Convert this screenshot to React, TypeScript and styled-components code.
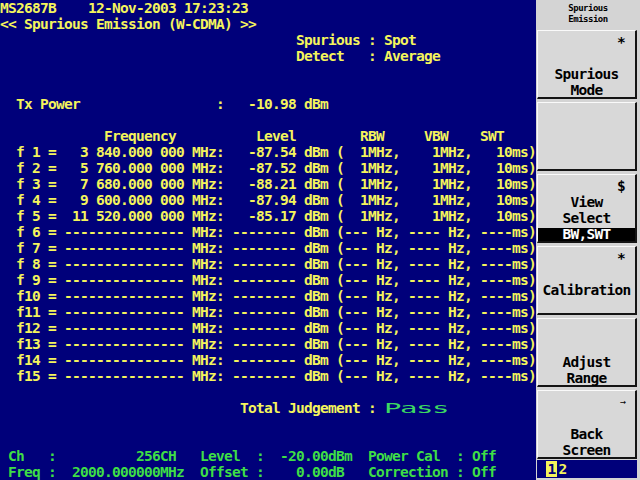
import React from 'react';
import styled, { createGlobalStyle } from 'styled-components';

const NAVY = '#00007a';
const YELLOW = '#f4f45c';
const GREEN = '#3ede46';

const GlobalStyle = createGlobalStyle`
  html, body {
    margin: 0;
    padding: 0;
    background: ${NAVY};
  }
  body {
    width: 640px;
    height: 480px;
    overflow: hidden;
  }
`;

const Frame = styled.div`
  display: flex;
  width: 640px;
  height: 480px;
  font-family: 'DejaVu Sans Mono', 'Liberation Mono', monospace;
  font-weight: bold;
  font-size: 14.5px;
  letter-spacing: -0.73px;
`;

const Screen = styled.div`
  width: 536px;
  background: ${NAVY};
  color: ${YELLOW};
  display: grid;
  grid-auto-rows: 16px;
`;

const Line = styled.div<{ $green?: boolean }>`
  display: grid;
  grid-template-columns: repeat(67, 8px);
  height: 16px;
  line-height: 16px;
  white-space: pre;
  color: ${(p) => (p.$green ? GREEN : 'inherit')};
`;

const Cell = styled.span<{ $c: number; $w: number; $right?: boolean }>`
  grid-column: ${(p) => p.$c + 1} / span ${(p) => p.$w};
  grid-row: 1;
  text-align: ${(p) => (p.$right ? 'right' : 'left')};
`;

const Verdict = styled.span`
  display: inline-block;
  transform: scaleX(2);
  transform-origin: left center;
  color: #3cd862;
  font-weight: normal;
`;

const Panel = styled.div`
  width: 104px;
  background: #d4d4d4;
  display: flex;
  flex-direction: column;
  padding: 0 3px 0 1px;
  box-sizing: border-box;
  color: #000;
`;

const PanelTitle = styled.div`
  height: 30px;
  box-sizing: border-box;
  padding: 3px 0 0 2px;
  font-size: 9px;
  letter-spacing: -0.5px;
  line-height: 11px;
  text-align: center;
`;

const KeyStack = styled.div`
  display: flex;
  flex-direction: column;
  gap: 3px;
`;

const Key = styled.div`
  height: 69px;
  box-sizing: border-box;
  background: #d8d8d8;
  border-top: 1px solid #fafafa;
  border-left: 1px solid #fafafa;
  border-bottom: 2px solid #141414;
  border-right: 2px solid #141414;
  padding-top: 3px;
  display: grid;
  grid-template-rows: repeat(4, 16px);
  line-height: 16px;
  text-align: center;
  white-space: pre;
`;

const Mark = styled.div<{ $small?: boolean }>`
  text-align: right;
  padding-right: 10px;
  font-size: ${(p) => (p.$small ? '10px' : 'inherit')};
  font-weight: ${(p) => (p.$small ? 'normal' : 'bold')};
`;

const Inverse = styled.div`
  background: #000;
  color: #fff;
  height: 13px;
  line-height: 13px;
  margin-top: 2px;
`;

const PageBar = styled.div`
  height: 18px;
  margin-top: 1px;
  background: ${NAVY};
  display: flex;
  align-items: center;
  padding-left: 9px;
`;

const PageNum = styled.span<{ $active?: boolean }>`
  width: 11px;
  height: 16px;
  line-height: 16px;
  text-align: center;
  background: ${(p) => (p.$active ? YELLOW : 'transparent')};
  color: ${(p) => (p.$active ? NAVY : YELLOW)};
`;

type TProps = { c: number; t: string; w?: number; right?: boolean };
const T = ({ c, t, w, right }: TProps) => (
  <Cell $c={c} $w={w ?? t.length} $right={right}>
    {t}
  </Cell>
);

type Spur = { n: string; freq: string; level: string; rbw: string; vbw: string; swt: string };

const measured: [string, string][] = [
  ['3 840.000 000', '-87.54'],
  ['5 760.000 000', '-87.52'],
  ['7 680.000 000', '-88.21'],
  ['9 600.000 000', '-87.94'],
  ['11 520.000 000', '-85.17'],
];

const spurs: Spur[] = Array.from({ length: 15 }, (_, i) => {
  const n = i + 1 < 10 ? `f ${i + 1} =` : `f${i + 1} =`;
  const m = measured[i];
  if (m) return { n, freq: m[0], level: m[1], rbw: '1MHz,', vbw: '1MHz,', swt: '10ms)' };
  return {
    n,
    freq: '-'.repeat(15),
    level: '-'.repeat(8),
    rbw: '--- Hz,',
    vbw: '---- Hz,',
    swt: '----ms)',
  };
});

const SpurRow = ({ s }: { s: Spur }) => (
  <Line>
    <T c={2} t={s.n} />
    <T c={7} w={16} right t={s.freq} />
    <T c={24} t="MHz:" />
    <T c={28} w={9} right t={s.level} />
    <T c={38} t="dBm" />
    <T c={42} t="(" />
    <T c={43} w={7} right t={s.rbw} />
    <T c={50} w={9} right t={s.vbw} />
    <T c={59} w={8} right t={s.swt} />
  </Line>
);

type SoftKey = { mark?: string; lines: string[]; inverse?: string };

const keys: SoftKey[] = [
  { mark: '*', lines: ['', 'Spurious', 'Mode'] },
  { lines: ['', '', ''] },
  { mark: '$', lines: ['View', 'Select'], inverse: 'BW,SWT' },
  { mark: '*', lines: ['', 'Calibration', ''] },
  { lines: ['', 'Adjust', 'Range'] },
  { mark: '→', lines: ['', 'Back', 'Screen'] },
];

export default function App() {
  return (
    <>
      <GlobalStyle />
      <Frame>
        <Screen>
          <Line>
            <T c={0} t="MS2687B" />
            <T c={11} t="12-Nov-2003" />
            <T c={23} t="17:23:23" />
          </Line>
          <Line>
            <T c={0} t="<< Spurious Emission (W-CDMA) >>" />
          </Line>
          <Line>
            <T c={37} t="Spurious" />
            <T c={46} t=":" />
            <T c={48} t="Spot" />
          </Line>
          <Line>
            <T c={37} t="Detect" />
            <T c={46} t=":" />
            <T c={48} t="Average" />
          </Line>
          <Line />
          <Line />
          <Line>
            <T c={2} t="Tx Power" />
            <T c={27} t=":" />
            <T c={31} t="-10.98 dBm" />
          </Line>
          <Line />
          <Line>
            <T c={13} t="Frequency" />
            <T c={32} t="Level" />
            <T c={45} t="RBW" />
            <T c={53} t="VBW" />
            <T c={60} t="SWT" />
          </Line>
          {spurs.map((s) => (
            <SpurRow key={s.n} s={s} />
          ))}
          <Line />
          <Line>
            <T c={30} t="Total Judgement" />
            <T c={46} t=":" />
            <Cell $c={48} $w={8}>
              <Verdict>Pass</Verdict>
            </Cell>
          </Line>
          <Line />
          <Line />
          <Line $green>
            <T c={1} t="Ch" />
            <T c={6} t=":" />
            <T c={17} t="256CH" />
            <T c={25} t="Level" />
            <T c={32} t=":" />
            <T c={35} t="-20.00dBm" />
            <T c={46} t="Power Cal" />
            <T c={57} t=":" />
            <T c={59} t="Off" />
          </Line>
          <Line $green>
            <T c={1} t="Freq" />
            <T c={6} t=":" />
            <T c={9} t="2000.000000MHz" />
            <T c={25} t="Offset" />
            <T c={32} t=":" />
            <T c={37} t="0.00dB" />
            <T c={46} t="Correction" />
            <T c={57} t=":" />
            <T c={59} t="Off" />
          </Line>
        </Screen>
        <Panel>
          <PanelTitle>
            Spurious
            <br />
            Emission
          </PanelTitle>
          <KeyStack>
            {keys.map((k, i) => (
              <Key key={i}>
                <Mark $small={k.mark === '→'}>{k.mark ?? ''}</Mark>
                {k.lines.map((l, j) => (
                  <div key={j}>{l}</div>
                ))}
                {k.inverse && <Inverse>{k.inverse}</Inverse>}
              </Key>
            ))}
          </KeyStack>
          <PageBar>
            <PageNum $active>1</PageNum>
            <PageNum>2</PageNum>
          </PageBar>
        </Panel>
      </Frame>
    </>
  );
}
